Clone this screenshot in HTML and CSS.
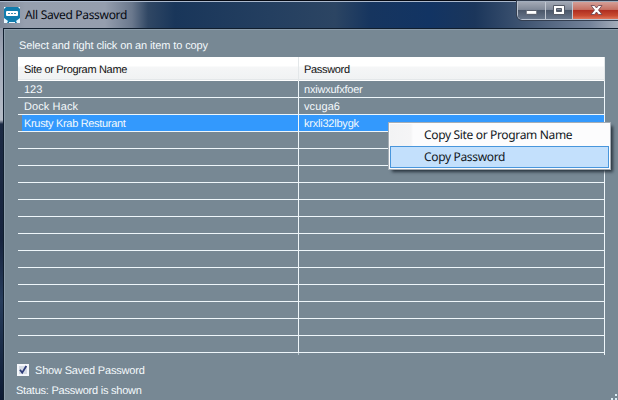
FILE: index.html
```html
<!DOCTYPE html>
<html lang="en">
<head>
<meta charset="utf-8">
<title>All Saved Password</title>
<link rel="stylesheet" href="styles.css">
</head>
<body>
<div class="window">
  <header class="titlebar">
    <svg class="app-icon" viewBox="0 0 16 16"><rect width="16" height="16" rx="1" fill="#117cad"/><path d="M0 0h2L0 2zM16 0h-2l2 2zM0 11l4 3-1 2H0zM16 11l-4 3 1 2h3zM5 15h6v1H5z" fill="#e9f7ff"/><rect x="2" y="4" width="12" height="5" rx="1" fill="#fff"/><path d="M4 6.5h2M7 6.5h2M10 6.5h2" stroke="#428db1"/></svg>
    <h1 class="title">All Saved Password</h1>
    <div class="controls">
      <span class="control minimize"><svg viewBox="0 0 28 17"><rect x="8.5" y="8.5" width="11" height="4" rx=".5" fill="#fff" stroke="#555b67"/></svg></span>
      <span class="control maximize"><svg viewBox="0 0 26 17"><path d="M7.5 3.5h11v9h-11zM10.5 6.5v3h5v-3z" fill="#fff" fill-rule="evenodd" stroke="#555b67"/></svg></span>
      <span class="control close"><svg viewBox="0 0 46 17"><path d="M18 3.5h3.5L23.5 6l2-2.5H29L25.5 8l3.500 4.500h-3.500l-2-2.500-2 2.500H18L21.500 8z" fill="#fff" stroke="#66404b" stroke-width=".8"/></svg></span>
    </div>
  </header>
  <main class="client">
    <p class="hint">Select and right click on an item to copy</p>
    <div class="list">
      <div class="row head"><span class="tight">Site or Program Name</span><span class="tight">Password</span></div>
      <div class="row"><span>123</span><span class="snug">nxiwxufxfoer</span></div>
      <div class="row"><span class="wide">Dock Hack</span><span class="wide">vcuga6</span></div>
      <div class="row selected"><span class="tight">Krusty Krab Resturant</span><span class="snug">krxli32lbygk</span></div>
      <div class="row"><span></span><span></span></div>
      <div class="row"><span></span><span></span></div>
      <div class="row"><span></span><span></span></div>
      <div class="row"><span></span><span></span></div>
      <div class="row"><span></span><span></span></div>
      <div class="row"><span></span><span></span></div>
      <div class="row"><span></span><span></span></div>
      <div class="row"><span></span><span></span></div>
      <div class="row"><span></span><span></span></div>
      <div class="row"><span></span><span></span></div>
      <div class="row"><span></span><span></span></div>
      <div class="row"><span></span><span></span></div>
      <div class="row"><span></span><span></span></div>
      <div class="row tail"><span></span><span></span></div>
    </div>
    <div class="option">
      <svg class="check" viewBox="0 0 12 12"><rect width="12" height="12" fill="#f5f7fb"/><rect x="2" y="2" width="8" height="8" fill="#d5dbe5"/><path d="M3 5.7l2.200 3L9.300 2" fill="none" stroke="#303d79" stroke-width="1.8"/></svg>
      <span class="option-label">Show Saved Password</span>
    </div>
    <p class="status">Status: Password is shown</p>
  </main>
  <svg class="grip" viewBox="0 0 7 7"><path d="M4 0h2v2H4zM4 4h2v2H4zM0 4h2v2H0z" fill="#dcecf3"/></svg>
  <div class="menu">
    <div class="item">Copy Site or Program Name</div>
    <div class="item active">Copy Password</div>
  </div>
</div>
</body>
</html>
```
FILE: styles.css
```css
* { box-sizing: border-box; }
body { margin: 0; font: 11px/16px "Liberation Sans", Arial, sans-serif; color: #f4f9fc; text-rendering: geometricPrecision; }
p, h1 { margin: 0; font-weight: normal; }
.window {
  position: relative; width: 618px; height: 400px; overflow: hidden; padding-left: 3px;
  background: linear-gradient(#7d8697 0, #a3abba 60px, #b5bcc7 120px, #1c2a44 124px, #17243e 240px, #283d5c 300px, #0c1a33);
}
.titlebar {
  height: 28px; margin-left: -3px; display: flex; align-items: flex-start;
  border-top: 1px solid #050912; padding: 0 0 0 4px;
  box-shadow: inset 0 1px #aab8cc;
  background:
    linear-gradient(90deg, #7c8798 0, #969fae 25px, #959eae 105px, #6a788d 132px, #304764 148px, #19365a 175px, #243f60 270px, #2c4563 335px, #16355f 370px, #123463 430px, #1b365b 475px, #405572 525px, #74839a 590px, #a4adbb);
}
.app-icon { width: 16px; height: 16px; margin-top: 6px; flex: none; }
.title { font: 12px/18px "Noto Sans", sans-serif; margin: 5px 0 0 5px; color: #050911; white-space: nowrap; letter-spacing: -.33px; }
.controls { display: flex; margin-left: auto; width: 101px; height: 19px; border: 1px solid #b9c2cf; border-top-color: #a3aebd; border-right: 0; border-radius: 0 0 0 5px; overflow: hidden; outline: 1px solid #333e50; }
.control { height: 17px; border-right: 1px solid #c2c8d2; background: linear-gradient(#a2a8b4 0, #818a99 44%, #4a5669 48%, #68768a 100%); }
.control svg { display: block; height: 17px; width: 100%; }
.minimize { width: 28px; }
.maximize { width: 27px; }
.close { width: 45px; border-right: 0; background: linear-gradient(#d49f97 0, #c67264 44%, #af2d20 48%, #c84a31 80%, #df765c); }
.close svg { width: 46px; }
.client { height: 372px; background: #778894; border: 1px solid #101e2e; border-width: 1px 0 0 1px; padding: 9px 12px 0 12px; box-shadow: inset 1px 1px #8b9caa; }
.hint { height: 19px; padding-left: 3px; letter-spacing: -.12px; white-space: nowrap; }
.list { width: 587px; margin-left: 2px; }
.row { display: grid; grid-template-columns: 281px 306px; height: 17px; }
.row > span { padding: 1px 0 0 6px; border-bottom: 1px solid #eef6fa; border-right: 1px solid #eef6fa; line-height: 17px; height: 17px; white-space: nowrap; }
.row > span + span { padding-left: 5px; }
.row > .tight { letter-spacing: -.32px; }
.row > .snug { letter-spacing: -.22px; }
.row > .wide { letter-spacing: .1px; }
.row.head { height: 24px; color: #111; background: linear-gradient(#fff 0, #fff 9px, #f5f6f7 10px, #f0f2f3 22px, #d7dcdf 23px, #fff 23px); }
.row.head > span { height: 24px; line-height: 24px; border-bottom: 0; border-right-color: #e3e7e9; }
.row.selected > span { background: #3399fd; }
.row.selected > span:first-child { background: linear-gradient(90deg, #778894 4px, #3399fd 4px); }
.row.tail, .row.tail > span { height: 2px; border-bottom: 0; }
.row.tail > span:first-child { border-right-color: #b8c6ce; }
.option { display: flex; height: 16px; margin-top: 7px; align-items: center; }
.check { width: 12px; height: 12px; margin: 0 0 1px 1px; }
.option-label { margin: 1px 0 0 6px; letter-spacing: -.18px; }
.status { margin-top: 5px; white-space: nowrap; letter-spacing: -.23px; }
.grip { position: absolute; width: 7px; height: 7px; right: 0; bottom: -1px; }
.menu { position: absolute; left: 389px; top: 123px; width: 221px; height: 46px; padding: 1px; background: #fcfcfd; color: #111722; box-shadow: 0 0 0 1px #a5adb5, 3px 3px 3px #2b3640; font: 12px/20px "Noto Sans", sans-serif; letter-spacing: -.34px; }
.item { height: 22px; padding: 1px 0 0 34px; white-space: nowrap; background: linear-gradient(90deg, #f2f3f4 0, #f5f5f6 21px, #fcfcfd 23px); }
.item.active { border: 1px solid #4896dc; background: #c3e0fc; padding: 0 0 0 33px; }
```
